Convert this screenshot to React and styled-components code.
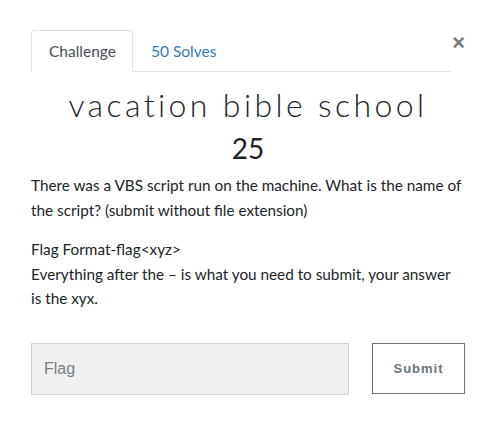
import { createGlobalStyle, styled } from "styled-components";

const Global = createGlobalStyle`
  body {
    margin: 0;
    background: #fff;
    font-family: Lato, "Open Sans", sans-serif;
    color: #212529;
  }
`;

const Modal = styled.div`
  padding: 30px 29px 0 31px;
  display: flex;
  flex-direction: column;
`;

const Header = styled.div`
  display: flex;
  align-items: flex-start;
`;

const Tabs = styled.ul`
  flex: 0 0 420px;
  display: flex;
  margin: 0;
  padding: 0;
  list-style: none;
  border-bottom: 1px solid #dee2e6;
`;

const Tab = styled.li`
  margin-bottom: -1px;
  padding: 0 16px 0 17px;
  height: 42px;
  box-sizing: border-box;
  display: flex;
  align-items: center;
  font-size: 15.5px;
  color: ${(p) => (p.$active ? "#495057" : "#337ab7")};
  background: ${(p) => (p.$active ? "#fff" : "transparent")};
  border: 1px solid ${(p) => (p.$active ? "#dee2e6" : "transparent")};
  border-bottom-color: ${(p) => (p.$active ? "#fff" : "transparent")};
  border-radius: 4px 4px 0 0;
`;

const Close = styled.button`
  margin-left: auto;
  margin-top: 2px;
  background: none;
  border: none;
  padding: 0;
  font-family: "Liberation Sans", Arial, sans-serif;
  font-size: 22px;
  font-weight: 700;
  line-height: 22px;
  color: #777;
  cursor: pointer;
`;

const Title = styled.h3`
  margin: 13px 0 0;
  text-align: center;
  font-family: Lato, sans-serif;
  font-weight: 300;
  font-size: 32px;
  letter-spacing: 3.4px;
  line-height: 40px;
`;

const Value = styled.h4`
  margin: 7px 0 0;
  text-align: center;
  font-weight: 400;
  font-size: 28px;
  line-height: 32px;
`;

const Description = styled.div`
  margin-top: 9px;
  max-width: 432px;
  font-size: 15.3px;
  line-height: 24.5px;
  p {
    margin: 0 0 15px;
  }
`;

const Form = styled.form`
  margin-top: 17px;
  display: flex;
  align-items: flex-start;
  gap: 23px;
`;

const FlagInput = styled.input`
  width: 318px;
  height: 52px;
  box-sizing: border-box;
  padding: 0 12px;
  background: #f0f0f0;
  border: 1px solid #d1d3d8;
  font-family: "Liberation Sans", Arial, sans-serif;
  font-size: 16px;
  color: #495057;
  &::placeholder {
    color: #7a7f85;
  }
`;

const SubmitButton = styled.button`
  width: 93px;
  height: 51px;
  box-sizing: border-box;
  background: #fff;
  border: 1px solid #6c757d;
  font-family: "Liberation Sans", Arial, sans-serif;
  font-weight: 700;
  font-size: 13px;
  letter-spacing: 1px;
  color: #6c757d;
`;

export default function App() {
  return (
    <>
      <Global />
      <Modal>
        <Header>
          <Tabs>
            <Tab $active>Challenge</Tab>
            <Tab>50 Solves</Tab>
          </Tabs>
          <Close aria-label="Close">×</Close>
        </Header>
        <Title>vacation bible school</Title>
        <Value>25</Value>
        <Description>
          <p>
            There was a VBS script run on the machine. What is the name of the
            script? (submit without file extension)
          </p>
          <p>
            Flag Format-flag&lt;xyz&gt;
            <br />
            Everything after the – is what you need to submit, your answer is
            the xyx.
          </p>
        </Description>
        <Form onSubmit={(e) => e.preventDefault()}>
          <FlagInput placeholder="Flag" />
          <SubmitButton type="submit">Submit</SubmitButton>
        </Form>
      </Modal>
    </>
  );
}
